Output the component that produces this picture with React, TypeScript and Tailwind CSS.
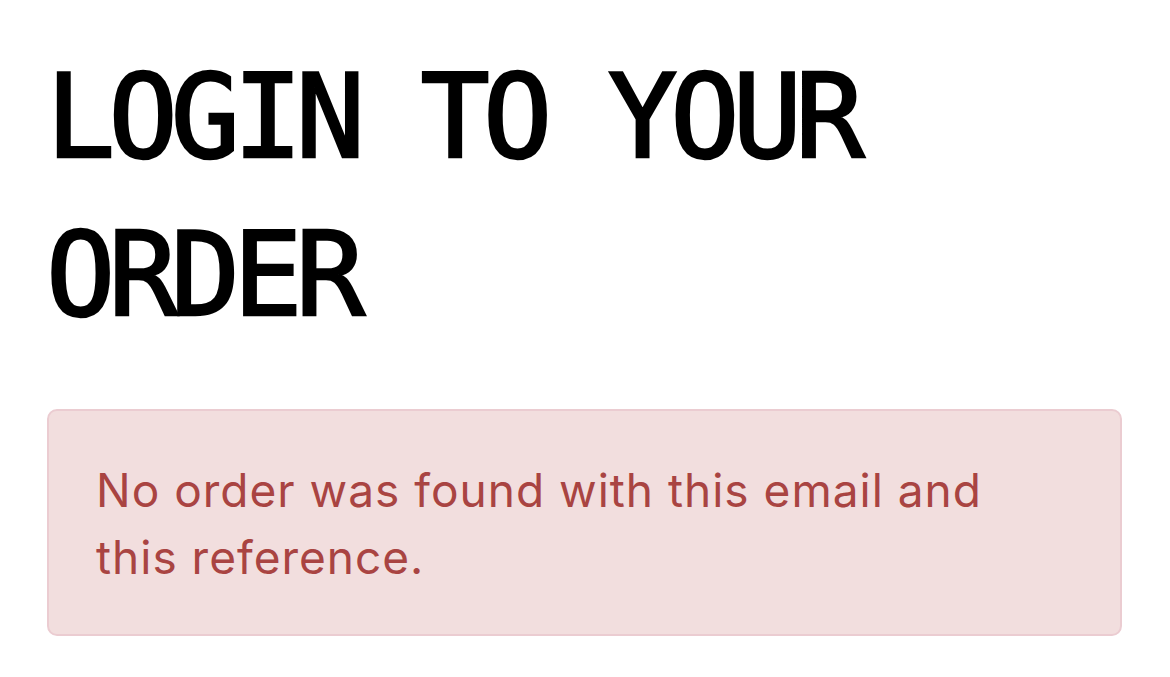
export default function App() {
  return (
    <div className="min-h-[677px] w-full bg-white">
      <div className="pt-[38px] pl-[46px] pr-[20px]">
        <h1 className="font-['DejaVu_Sans_Mono',monospace] text-[115px] font-normal leading-[158px] tracking-[-6.8px] text-black [-webkit-text-stroke:2.5px_black]">
          LOGIN TO YOUR
          <br />
          ORDER
        </h1>
      </div>
      <div className="mt-[55px] ml-[47px] w-[1075px] h-[227px] rounded-[10px] border-2 border-[#ebccd1] bg-[#f2dede] pt-[46px] pl-[47px] pr-[60px]">
        <p className="font-['Inter',sans-serif] text-[46px] leading-[67px] tracking-[1px] text-[#a94442]">
          No order was found with this email and this reference.
        </p>
      </div>
    </div>
  );
}
